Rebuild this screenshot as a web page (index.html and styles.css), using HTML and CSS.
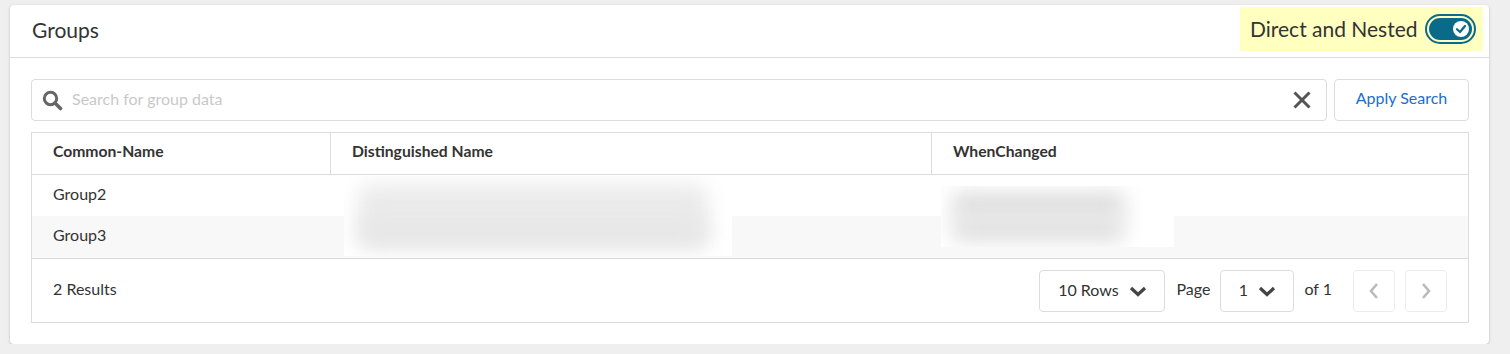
FILE: index.html
```html
<!DOCTYPE html>
<html lang="en">
<head>
<meta charset="utf-8">
<title>Groups</title>
<link rel="stylesheet" href="styles.css">
</head>
<body>
<div class="card">
  <div class="card-header">
    <h2 class="title">Groups</h2>
    <div class="toggle-wrap">
      <span class="toggle-label">Direct and Nested</span>
      <span class="toggle">
        <span class="track">
          <span class="knob">
            <svg width="12" height="12" viewBox="0 0 12 12"><polyline points="2,6.2 5,9 10,3" fill="none" stroke="#0a6a8a" stroke-width="2.2" stroke-linecap="round" stroke-linejoin="round"/></svg>
          </span>
        </span>
      </span>
    </div>
  </div>
  <div class="card-body">
    <div class="search-row">
      <div class="search-box">
        <svg class="search-icon" width="21" height="21" viewBox="0 0 21 21"><circle cx="8.5" cy="8.5" r="6.2" fill="none" stroke="#666" stroke-width="3"/><line x1="13" y1="13" x2="18.5" y2="18.5" stroke="#666" stroke-width="3.6" stroke-linecap="round"/></svg>
        <span class="placeholder">Search for group data</span>
        <svg class="clear-icon" width="20" height="20" viewBox="0 0 20 20"><line x1="2.5" y1="2.5" x2="17.5" y2="17.5" stroke="#555" stroke-width="3"/><line x1="17.5" y1="2.5" x2="2.5" y2="17.5" stroke="#555" stroke-width="3"/></svg>
      </div>
      <button class="apply">Apply Search</button>
    </div>
    <div class="table">
      <div class="thead">
        <div class="th">Common-Name</div>
        <div class="th">Distinguished Name</div>
        <div class="th last">WhenChanged</div>
      </div>
      <div class="tbody">
        <div class="tr first">
          <div class="td">Group2</div><div class="td"></div><div class="td"></div>
        </div>
        <div class="tr alt">
          <div class="td">Group3</div><div class="td"></div><div class="td"></div>
        </div>
        <div class="blur blur-dn"><span class="bar b1"></span><span class="bar b2"></span></div>
        <div class="blur blur-wc"><span class="bar b3"></span><span class="bar b4"></span></div>
      </div>
      <div class="tfoot">
        <span class="results">2 Results</span>
        <div class="pager">
          <div class="select rows-select">10 Rows
            <svg width="18" height="12" viewBox="0 0 18 12"><polyline points="2,3 9,9.5 16,3" fill="none" stroke="#444" stroke-width="3.2"/></svg>
          </div>
          <span class="pg-label">Page</span>
          <div class="select page-select">1
            <svg width="18" height="12" viewBox="0 0 18 12"><polyline points="2,3 9,9.5 16,3" fill="none" stroke="#444" stroke-width="3.2"/></svg>
          </div>
          <span class="pg-of">of 1</span>
          <div class="nav-btn prev">
            <svg width="12" height="18" viewBox="0 0 12 18"><polyline points="9,2 3,9 9,16" fill="none" stroke="#bbb" stroke-width="2.6"/></svg>
          </div>
          <div class="nav-btn next">
            <svg width="12" height="18" viewBox="0 0 12 18"><polyline points="3,2 9,9 3,16" fill="none" stroke="#bbb" stroke-width="2.6"/></svg>
          </div>
        </div>
      </div>
    </div>
  </div>
</div>
</body>
</html>
```
FILE: styles.css
```css
* { box-sizing: border-box; }
html, body { margin: 0; padding: 0; }
body {
  background: #efefef;
  font-family: Lato, "Open Sans", "Liberation Sans", sans-serif;
  color: #333;
  padding: 5px 0 0 10px;
}
.card {
  width: 1479px;
  height: 339px;
  background: #fff;
  border-radius: 4px;
  box-shadow: 0 1px 3px rgba(0,0,0,0.22);
  display: flex;
  flex-direction: column;
}
.card-header {
  height: 53px;
  border-bottom: 1px solid #dcdcdc;
  display: flex;
  align-items: flex-start;
  justify-content: space-between;
  padding: 2px 6px 0 22px;
}
.title {
  margin: 0;
  font-size: 21px;
  font-weight: 400;
  line-height: 25px;
  margin-top: 10px;
  color: #333;
}
.toggle-wrap {
  height: 44px;
  width: 243px;
  background: #ffffc0;
  display: flex;
  align-items: center;
  padding-left: 10px;
  gap: 7px;
}
.toggle-label {
  font-size: 21px;
  color: #333;
  margin-top: -2px;
}
.toggle {
  width: 51px;
  height: 30px;
  border: 2px solid #0a6a8a;
  border-radius: 15px;
  padding: 2px;
  display: flex;
}
.track {
  flex: 1;
  background: #0a6a8a;
  border-radius: 12px;
  display: flex;
  align-items: center;
  justify-content: flex-end;
  padding-right: 3px;
}
.knob {
  width: 16px;
  height: 16px;
  border-radius: 50%;
  background: #fff;
  display: flex;
  align-items: center;
  justify-content: center;
}
.card-body {
  padding: 21px 20px 0 21px;
}
.search-row {
  display: flex;
  gap: 7px;
  height: 42px;
}
.search-box {
  flex: 1;
  border: 1px solid #dcdcdc;
  border-radius: 4px;
  display: flex;
  align-items: center;
  padding-left: 10px;
  padding-right: 14px;
}
.search-icon { flex: none; }
.placeholder {
  margin-left: 9px;
  font-size: 16px;
  color: #c9c9c9;
  flex: 1;
  margin-bottom: 4px;
}
.clear-icon { flex: none; }
.apply {
  width: 135px;
  border: 1px solid #dcdcdc;
  border-radius: 4px;
  background: #fff;
  font-family: inherit;
  font-size: 16px;
  color: #1a6ed0;
  padding: 0 0 5px;
}
.table {
  margin-top: 11px;
  border: 1px solid #dcdcdc;
}
.thead, .tr {
  display: grid;
  grid-template-columns: 299px 601px 1fr;
}
.thead {
  height: 42px;
  border-bottom: 1px solid #dcdcdc;
}
.th {
  font-weight: 700;
  font-size: 15.7px;
  display: flex;
  align-items: center;
  padding: 0 0 5px 21px;
  border-right: 1px solid #dcdcdc;
}
.th.last { border-right: none; }
.tbody {
  position: relative;
  border-bottom: 1px solid #dcdcdc;
}
.tr { height: 42px; }
.tr.first { height: 41px; }
.tr.alt { background: #f8f8f8; }
.td {
  font-size: 16px;
  display: flex;
  align-items: center;
  padding: 0 0 5px 21px;
}
.blur {
  position: absolute;
  background: #fff;
  overflow: hidden;
}
.blur-dn { left: 312px; top: 1px; width: 388px; height: 80px; }
.blur-wc { left: 909px; top: 11px; width: 233px; height: 61px; }
.bar {
  position: absolute;
  filter: blur(10px);
  border-radius: 12px;
}
.b1 { left: 14px; top: 8px; width: 350px; height: 60px; background: #ebebeb; }
.b2 { left: 14px; top: 42px; width: 350px; height: 30px; background: #e7e7e7; }
.b3 { left: 10px; top: 6px; width: 175px; height: 26px; background: #dedede; }
.b4 { left: 10px; top: 30px; width: 175px; height: 26px; background: #e0e0e0; }
.tfoot {
  height: 63px;
  display: flex;
  align-items: center;
  justify-content: space-between;
  padding: 0 21px 0 21px;
}
.results { font-size: 16px; margin-bottom: 4px; }
.pager {
  display: flex;
  align-items: center;
}
.select {
  height: 42px;
  border: 1px solid #dcdcdc;
  border-radius: 4px;
  display: flex;
  align-items: center;
  justify-content: center;
  gap: 10px;
  font-size: 16px;
  color: #333;
  padding-bottom: 3px;
}
.select svg { margin-top: 3px; }
.rows-select { width: 126px; }
.page-select { width: 74px; }
.pg-label { font-size: 16px; margin: 0 10px 4px 11px; }
.pg-of { font-size: 16px; margin: 0 21px 4px 10px; }
.nav-btn {
  width: 42px;
  height: 42px;
  border: 1px solid #ececec;
  border-radius: 4px;
  display: flex;
  align-items: center;
  justify-content: center;
}
.nav-btn.next { margin-left: 10px; }
```
